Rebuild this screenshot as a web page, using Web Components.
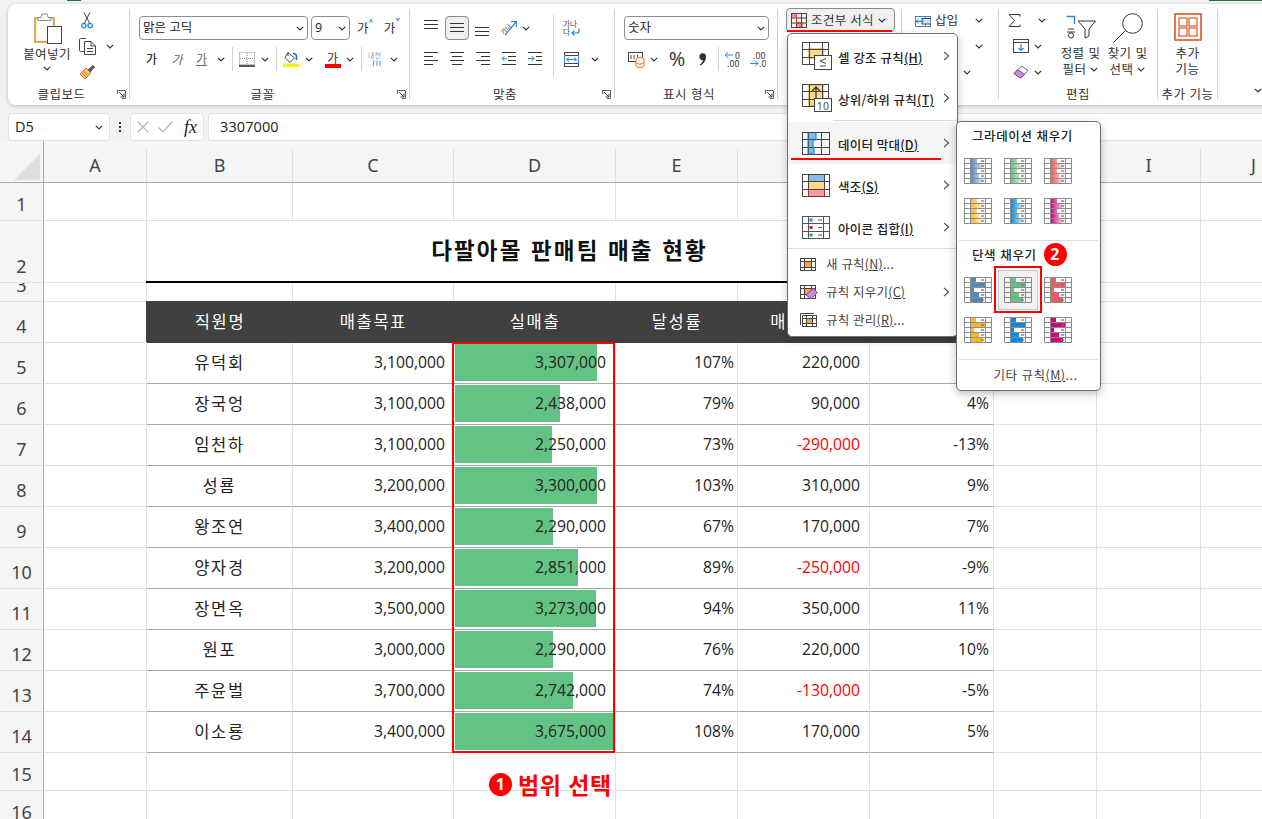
<!DOCTYPE html>
<html lang="ko">
<head>
<meta charset="utf-8">
<title>조건부 서식</title>
<style>
  html, body { margin: 0; height: 100%; overflow: hidden; background: #f3f3f3; }
  body { font-family: "Open Sans", "Noto Sans CJK KR", sans-serif; color: #222; position: relative; }
</style>
</head>
<body>
<xl-top-strip></xl-top-strip>
<xl-ribbon></xl-ribbon>
<xl-formula-bar name="D5" value="3307000"></xl-formula-bar>
<xl-sheet></xl-sheet>
<xl-cf-menu></xl-cf-menu>
<xl-bar-submenu></xl-bar-submenu>

<script>
const KR = `"Noto Sans CJK KR", sans-serif`;
const MIX = `"Open Sans", "Noto Sans CJK KR", sans-serif`;

// grid lines helper for the little table icons
const hLines = (ys, w, x = 0, stroke = "#333") => ys.map(y => `<path d="M${x} ${y}H${x + w}" stroke="${stroke}"/>`).join("");
const tableGrid = (w, h, xs, ys, stroke = "#444") =>
  `<rect x=".5" y=".5" width="${w - 1}" height="${h - 1}" fill="none" stroke="${stroke}"/>` +
  xs.map(x => `<path d="M${x} 0V${h}" stroke="${stroke}"/>`).join("") +
  ys.map(y => `<path d="M0 ${y}H${w}" stroke="${stroke}"/>`).join("");
const ktext = (x, y, s, size, fill = "#444", extra = "") =>
  `<text x="${x}" y="${y}" font-size="${size}" fill="${fill}" font-family='${KR}' ${extra}>${s}</text>`;
// two lines in one svg text element
const k2lines = (a, b, size, fill = "#444") =>
  `<text font-size="${size}" fill="${fill}" font-family='${KR}'><tspan x="${a[0]}" y="${a[1]}">${a[2]}</tspan><tspan x="${b[0]}" y="${b[1]}">${b[2]}</tspan></text>`;

const ICONS = {
  paste: [28, 31, `<rect x="1" y="5" width="19" height="24" fill="#fff3d6" stroke="#d79545" stroke-width="1.6"/>
    <rect x="3" y="7.5" width="15" height="19" fill="#fff"/>
    <path d="M4 7.5V4.5H7L8 1H13L14 4.5H17V7.5Z" fill="#fff" stroke="#8a8a8a"/>
    <rect x="13.5" y="13.5" width="14" height="17" fill="#fff" stroke="#444"/>`],
  cut: [12, 17, `<path d="M3 0.5L8.5 11M9 0.5L3.5 11" stroke="#444" fill="none"/>
    <circle cx="2.8" cy="13.6" r="2.2" fill="none" stroke="#2b88d8" stroke-width="1.3"/>
    <circle cx="9.2" cy="13.6" r="2.2" fill="none" stroke="#2b88d8" stroke-width="1.3"/>`],
  copy: [17, 17, `<path d="M5.5 13.5H1.5a1 1 0 0 1-1-1V1.5a1 1 0 0 1 1-1H7" fill="none" stroke="#444"/>
    <path d="M5.5 3.5H12L16.5 8V16.5H5.5Z" fill="#fff" stroke="#444"/>
    <path d="M12 3.5V8H16.5M8 10.5H14M8 13.5H14" fill="none" stroke="#444"/>`],
  painter: [17, 16, `<path d="M1 10L7 4L12 9L6 15Z" fill="#f6c27a" stroke="#d9771e"/>
    <path d="M3 9L7 13M5 7.5L9 11.5" stroke="#d9771e"/>
    <path d="M9 6L14 1.5L15.5 3L11 8" fill="#666" stroke="#444"/>`],
  launcher: [9, 9, `<path d="M.5 4V.5H8.5V8.5H5" fill="none" stroke="#666"/>
    <path d="M2 2L7 7M7 3.5V7H3.5" fill="none" stroke="#444"/>`],
  border: [16, 15, `<rect x=".5" y=".5" width="15" height="12" fill="none" stroke="#888" stroke-dasharray="1 1"/>
    <path d="M8 1V12M1 6.5H15" stroke="#888" stroke-dasharray="1 1"/>
    <path d="M0 14H16" stroke="#111" stroke-width="1.4"/>`],
  fill: [16, 16, `<path d="M5 1.5L11.5 7L7 11.5L2 6.5Z" fill="#fff" stroke="#444"/>
    <path d="M5 1.5V5" stroke="#444"/>
    <path d="M10 2.5a3 3 0 0 1 3.5 3V9" fill="none" stroke="#1f6fd0" stroke-width="1.6"/>
    <rect y="12.5" width="16" height="3.5" fill="#ffef00"/>`],
  fontcolor: [16, 17, `${ktext(2, 11.5, "가", 12, "#333")}<rect y="13" width="16" height="4" fill="#f00"/>`],
  ruby: [16, 16, `${ktext(0, 6.5, "내천", 7, "#999")}<path d="M6 9.5L5 15.5M9 9.5V15M12 9.5V15" stroke="#4a9be0" fill="none"/>`],
  "al-top": [14, 16, hLines([.5, 4.5, 8.5], 14)],
  "al-mid": [14, 16, hLines([3.5, 7.5, 11.5], 14)],
  "al-bot": [14, 16, hLines([7.5, 11.5, 15.5], 14)],
  orient: [16, 16, `${ktext(0, 13, "가나", 6.5, "#444", 'transform="rotate(-45 4 11)"')}
    <path d="M4 15L15 2M10 1.5H15.5V7" fill="none" stroke="#2b88d8" stroke-width="1.2"/>`],
  "ln-left": [14, 14, `<path d="M0 .5H14M0 4.5H9M0 8.5H14M0 12.5H9" stroke="#333"/>`],
  "ln-center": [14, 14, `<path d="M0 .5H14M2 4.5H12M0 8.5H14M2 12.5H12" stroke="#333"/>`],
  "ln-right": [14, 14, `<path d="M0 .5H14M5 4.5H14M0 8.5H14M5 12.5H14" stroke="#333"/>`],
  "ln-out": [14, 14, `<path d="M0 .5H14M6 4.5H14M6 8.5H14M0 12.5H14" stroke="#333"/><path d="M5 6.5H0M2.5 4L0 6.5L2.5 9" fill="none" stroke="#2b88d8"/>`],
  "ln-in": [14, 14, `<path d="M0 .5H14M8 4.5H14M8 8.5H14M0 12.5H14" stroke="#333"/><path d="M0 6.5H6M3.5 4L6 6.5L3.5 9" fill="none" stroke="#2b88d8"/>`],
  wrap: [17, 16, `${k2lines([0, 7, "가나"], [0, 15, "다"], 7.5)}
    <path d="M16 8.5V11a2 2 0 0 1-2 2H9M11.5 10.5L9 13L11.5 15.5" fill="none" stroke="#2b88d8" stroke-width="1.2"/>`],
  merge: [15, 15, `<rect x=".5" y=".5" width="14" height="14" fill="none" stroke="#444"/>
    <path d="M0 3.5H15M0 11.5H15" stroke="#444"/><rect x="1" y="4" width="13" height="7" fill="#fff"/>
    <path d="M.5 3V12M14.5 3V12" stroke="#2b88d8"/><path d="M2.5 7.5H12.5M5 5.5L2.5 7.5L5 9.5M10 5.5L12.5 7.5L10 9.5" fill="none" stroke="#2b88d8"/>`],
  account: [17, 17, `<rect x=".5" y="1.5" width="14" height="9" fill="#fff" stroke="#444"/>
    <path d="M3 4V8M6 4V8M9.500 4V8" stroke="#444"/>
    <ellipse cx="12" cy="8" rx="4" ry="1.600" fill="#fff" stroke="#d9771e"/>
    <path d="M8 8V15a4 1.600 0 0 0 8 0V8M8 11.500a4 1.600 0 0 0 8 0" fill="#fff" stroke="#d9771e"/>`],
  comma: [8, 13, `<path d="M3.800 .2a3.300 3.300 0 0 1 3.200 3.600c0 4-2.500 7.300-5.600 8.800l-.8-1c2-1.300 3.100-2.700 3.400-4.400a3.200 3.200 0 0 1-.2-7z" fill="#333"/>`],
  "dec-more": [17, 17, `<path d="M9 4H1M4 1L1 4L4 7" fill="none" stroke="#2b88d8"/>
    ${k2lines([11, 7.500, "0"], [3, 16, ".00"], 9)}`],
  "dec-less": [17, 17, `${k2lines([4, 7.500, ".00"], [10, 16, ".0"], 9)}
    <path d="M1 12.500H9M6 9.500L9 12.500L6 15.500" fill="none" stroke="#2b88d8"/>`],
  cf: [16, 15, `<rect x="1" y="0.500" width="5" height="4" fill="#f78a8a"/><rect x="5" y="9" width="7" height="5.500" fill="#f78a8a"/>
    ${tableGrid(16, 15, [5.5, 10.5], [5, 10])}
    <path d="M5.500 0V10H11" stroke="#e03a3a" fill="none"/>`],
  insert: [16, 13, `<rect x=".5" y="2.500" width="15" height="10" fill="#fff" stroke="#2b88d8"/>
    <path d="M0 7.500H16M10.500 2V13" stroke="#2b88d8"/><rect x="7" y="4.500" width="9" height="5.500" fill="#cfe4f7" stroke="#444"/>
    <path d="M9 7.200H1M3.500 5L1 7.200L3.500 9.500" fill="none" stroke="#2b88d8"/>`],
  sigma: [13, 13, `<path d="M12 2.500V.5H1L6.500 6.500L1 12.500H12V10.500" fill="none" stroke="#333" stroke-width="1"/>`],
  filldown: [16, 14, `<rect x=".5" y=".5" width="15" height="13" fill="#fff" stroke="#444"/><path d="M0 3.500H16" stroke="#444"/>
    <path d="M8 5V11.500M5.500 9L8 11.500L10.500 9" fill="none" stroke="#2b88d8" stroke-width="1.2"/>`],
  eraser: [16, 14, `<path d="M1 8.500L8.500 1L15 5.500L7.500 13Z" fill="#fff" stroke="#8a3fa0"/>
    <path d="M1 8.500L5 4.800L11.500 9.500L7.500 13Z" fill="#c88fd6" stroke="#8a3fa0"/>`],
  sort: [30, 24, `<path d="M.5 1.500H8.500V9" fill="none" stroke="#2b88d8" stroke-width="1.4"/>
    <path d="M2 14H8M1 17H9" stroke="#333"/><circle cx="5" cy="20.500" r="2.600" fill="none" stroke="#333"/>
    <path d="M12 6H29.500L23 14V21L19 23V14Z" fill="#fff" stroke="#333" stroke-linejoin="round"/>`],
  find: [30, 30, `<circle cx="19.500" cy="10.500" r="9.800" fill="#fff" stroke="#333"/>
    <path d="M12.500 17.500L.5 29.500" stroke="#333"/>`],
  addin: [28, 28, `<rect x="1" y="1" width="26" height="26" fill="#fff" stroke="#d83b01" stroke-width="1.4"/>
    <rect x="5" y="5" width="8" height="8" fill="none" stroke="#d83b01"/><rect x="15" y="5" width="8" height="8" fill="none" stroke="#d83b01"/>
    <rect x="5" y="15" width="8" height="8" fill="none" stroke="#d83b01"/><rect x="15" y="15" width="8" height="8" fill="none" stroke="#d83b01"/>`],
  cancel: [12, 12, `<path d="M.5 .5L11.500 11.500M11.500 .5L.5 11.500" stroke="#b8b8b8" stroke-width="1.200"/>`],
  check: [15, 12, `<path d="M.5 6.500L5 11L14.500 .5" fill="none" stroke="#b8b8b8" stroke-width="1.200"/>`],
  "cf-highlight": [30, 28, `<rect x="7" y="7" width="14" height="9" fill="#ffd98a" stroke="#e08a00"/>${tableGrid(27, 23, [7.500, 20.500], [7.500, 15.500])}
    <rect x="12.500" y="13.500" width="17" height="14" fill="#fff" stroke="#444"/><path d="M24 16.500L18 19L24 21.500M18 24H24" fill="none" stroke="#444"/>`],
  "cf-top": [30, 28, `<rect x="7" y="1" width="14" height="21" fill="#ffd98a" stroke="#e08a00"/>${tableGrid(27, 23, [7.500, 20.500], [7.500, 15.500])}
    <path d="M14 14V3M10 7L14 3L18 7" fill="none" stroke="#333" stroke-width="1.300"/>
    <rect x="12.500" y="14.500" width="17" height="13" fill="#fff" stroke="#444"/><text x="21" y="25.500" text-anchor="middle" font-size="10.500" fill="#444" font-family='"Open Sans"'>10</text>`],
  "cf-bars": [28, 23, `<rect x="6" y="1" width="8" height="7" fill="#7fb8ec"/><rect x="6" y="8" width="5" height="7" fill="#7fb8ec"/><rect x="6" y="15" width="6" height="7" fill="#7fb8ec"/>
    ${tableGrid(28, 23, [6.500, 19.500], [7.500, 15.500])}<path d="M6 1V22H12V15H11V8H14V1" fill="none" stroke="#1f74c4"/>`],
  "cf-scale": [28, 23, `<rect x="6" y="1" width="16" height="7" fill="#84bcf0"/><rect x="6" y="8" width="16" height="7" fill="#ffd98a"/><rect x="6" y="15" width="16" height="7" fill="#ff9aa0"/>
    ${tableGrid(28, 23, [6.500, 22.500], [7.500, 15.500])}<path d="M6.500 15V22M22.500 15V22" stroke="#c03030"/>`],
  "cf-iconset": [28, 23, `${tableGrid(28, 23, [6.500, 21.500], [7.500, 15.500], "#555")}
    <circle cx="9" cy="4" r="1.700" fill="#2b88d8"/><circle cx="9" cy="11.500" r="1.700" fill="#e81123"/><circle cx="9" cy="19" r="1.700" fill="#2b88d8"/>
    <path d="M16 4H20M16 11.500H20M16 19H20" stroke="#555"/>`],
  "cf-new": [16, 13, `<rect x="4" y="3" width="8" height="7" fill="#f7a93b"/>${tableGrid(16, 13, [4.500, 11.500], [3.500, 9.500])}`],
  "cf-clear": [18, 15, `<rect x="4" y="3" width="8" height="7" fill="#f7a93b"/>${tableGrid(16, 14, [4.500, 11.500], [3.500, 9.500])}
    <path d="M6 10L13 3.500L17.500 7.500L11 14Z" fill="#c88fd6" stroke="#8a3fa0"/>`],
  "cf-manage": [17, 14, `<path d="M.5 12V.5H14" fill="none" stroke="#444"/><g transform="translate(2 2)"><rect x="5" y="4" width="5" height="4" fill="#f7a93b"/>${tableGrid(15, 12, [4.500, 10.500], [3.500, 8.500])}</g>`],
};

// <xl-icon name="..."> : one inline svg from the ICONS map
class XlIcon extends HTMLElement {
  connectedCallback() {
    const [w, h, body] = ICONS[this.getAttribute("name")];
    this.attachShadow({ mode: "open" }).innerHTML = `
      <style>:host{display:inline-flex;flex:none;line-height:0}</style>
      <svg width="${w}" height="${h}" viewBox="0 0 ${w} ${h}" shape-rendering="geometricPrecision">${body}</svg>`;
  }
}
customElements.define("xl-icon", XlIcon);

class XlChevron extends HTMLElement {
  connectedCallback() {
    this.attachShadow({ mode: "open" }).innerHTML = `
      <style>:host{display:inline-flex;flex:none;line-height:0}</style>
      <svg width="8" height="5" viewBox="0 0 8 5"><path d="M.8 .8L4 4L7.200 .8" fill="none" stroke="#333" stroke-width="1.200"/></svg>`;
  }
}
customElements.define("xl-chevron", XlChevron);

// <xl-tool w="26"> : a fixed width cell in a ribbon row, centers whatever is slotted
class XlTool extends HTMLElement {
  connectedCallback() {
    const w = this.getAttribute("w");
    const ml = this.getAttribute("ml") || 0;
    this.attachShadow({ mode: "open" }).innerHTML = `
      <style>
        :host{display:flex;flex:none;align-items:center;justify-content:center;height:24px;box-sizing:border-box;
          width:${w}px;margin-left:${ml}px;font:12.500px/16px ${KR};color:#333}
        :host([active]){background:#f0f0f0;border:1px solid #8a8a8a;border-radius:4px}
      </style><slot></slot>`;
  }
}
customElements.define("xl-tool", XlTool);

class XlSelect extends HTMLElement {
  connectedCallback() {
    this.attachShadow({ mode: "open" }).innerHTML = `
      <style>
        :host{display:flex;flex:none;align-items:center;justify-content:space-between;box-sizing:border-box;height:24px;
          width:${this.getAttribute("w")}px;margin-left:${this.getAttribute("ml") || 0}px;padding:0 3px;background:#fff;
          border:1px solid #8d8d8d;border-radius:4px;font:12.500px/16px ${MIX};color:#222;white-space:nowrap}
      </style><slot></slot><xl-chevron></xl-chevron>`;
  }
}
customElements.define("xl-select", XlSelect);

// ribbon group: content on top, label and dialog launcher at the bottom, divider right
class XlGroup extends HTMLElement {
  connectedCallback() {
    const launcher = this.hasAttribute("launcher");
    this.attachShadow({ mode: "open" }).innerHTML = `
      <style>
        :host{display:flex;flex-direction:column;flex:none;box-sizing:border-box;height:90px;margin-top:5px;
          width:${this.getAttribute("w")}px;border-right:1px solid #d2d2d2}
        .body{flex:1;min-height:0}
        .foot{display:flex;align-items:center;height:16px;margin-bottom:-3px;padding-right:${launcher ? 3 : 0}px}
        .label{flex:1;text-align:center;font:12.500px/16px ${KR};color:#333;letter-spacing:.5px;white-space:nowrap}
        xl-icon{margin-left:2px}
      </style>
      <div class="body"><slot></slot></div>
      <div class="foot"><span class="label">${this.getAttribute("label") || ""}</span>
      ${launcher ? `<xl-icon name="launcher"></xl-icon>` : ""}</div>`;
  }
}
customElements.define("xl-group", XlGroup);

const tool = (w, inner, attrs = "") => `<xl-tool w="${w}" ${attrs}>${inner}</xl-tool>`;
const icon = n => `<xl-icon name="${n}"></xl-icon>`;
const chev = (w = 14, attrs = "") => tool(w, `<xl-chevron></xl-chevron>`, attrs);

class XlRibbon extends HTMLElement {
  connectedCallback() {
    const vsep = `<i class="sep"></i>`;
    this.attachShadow({ mode: "open" }).innerHTML = `
      <style>
        :host{display:flex;box-sizing:border-box;height:101px;margin:3px -12px 0 8px;background:#fff;border-radius:8px;
          box-shadow:0 1px 4px rgba(0,0,0,.22);font:12.500px/16px ${KR};color:#333}
        .row{display:flex;align-items:center;height:24px}
        .col{display:flex;flex-direction:column}
        .gap7{gap:7px}
        .split{display:flex}
        .sep{display:block;flex:none;width:1px;height:24px;background:#d2d2d2}
        .stack{text-align:center;white-space:nowrap;letter-spacing:.4px}
        .stack div{height:16px}
        .stack xl-chevron{vertical-align:2px;margin-left:4px}
        .paste{width:48px;margin-left:15px;padding-top:4px;align-items:center}
        .tail{flex:1;display:flex;align-items:flex-end;justify-content:flex-end;padding:0 12px 12px 0}
        .up{margin-top:-1px}
        .sup{font-size:8px;line-height:8px;color:#2b88d8;font-weight:700;align-self:flex-start;margin-top:2px}
      </style>

      <xl-group w="122" label="클립보드" launcher>
        <div class="split">
          <div class="col paste stack">
            <xl-icon name="paste" style="margin-left:2px"></xl-icon>
            <div style="margin-top:2px;line-height:16px">붙여넣기</div>
            <div style="height:16px;line-height:12px"><xl-chevron style="margin:0"></xl-chevron></div>
          </div>
          <div class="col up" style="gap:2px;margin-left:7px">
            <div class="row">${tool(18, icon("cut"))}</div>
            <div class="row">${tool(18, icon("copy"))}${chev(13, 'ml="7"')}</div>
            <div class="row">${tool(18, icon("painter"))}</div>
          </div>
        </div>
      </xl-group>

      <xl-group w="280" label="글꼴" launcher>
        <div class="col gap7" style="padding:7px 0 0 9px">
          <div class="row">
            <xl-select w="169">맑은 고딕</xl-select>
            <xl-select w="39" ml="3">9</xl-select>
            ${tool(14, `가<span class="sup">^</span>`, 'ml="8"')}
            ${tool(18, `가<span class="sup">ˇ</span>`, 'ml="11"')}
          </div>
          <div class="row">
            ${tool(25, `<span style="font-size:12px;font-weight:500">가</span>`)}
            ${tool(26, `<i style="color:#666;font-size:12px">가</i>`)}
            ${tool(23, `<u style="color:#666;font-size:12px">가</u>`)}
            ${chev(16)}
            ${tool(6, vsep)}
            ${tool(23, icon("border"))}${chev(14)}
            ${tool(9, vsep)}
            ${tool(20, icon("fill"))}${chev(16)}
            ${tool(20, icon("fontcolor"), 'ml="6"')}${chev(14)}
            ${tool(8, vsep)}
            ${tool(22, icon("ruby"))}${chev(14)}
          </div>
        </div>
      </xl-group>

      <xl-group w="205" label="맞춤" launcher>
        <div class="split" style="padding:7px 0 0 8px">
          <div class="col gap7" style="width:135px">
            <div class="row">
              ${tool(26, icon("al-top"))}${tool(24, icon("al-mid"), 'ml="1" active')}${tool(26, icon("al-bot"))}
              ${tool(24, icon("orient"), 'ml="2"')}${chev(10)}
            </div>
            <div class="row">
              ${tool(26, icon("ln-left"))}${tool(26, icon("ln-center"))}${tool(26, icon("ln-right"))}${tool(26, icon("ln-out"))}${tool(26, icon("ln-in"))}
            </div>
          </div>
          <i class="sep" style="height:62px;margin-top:-1px"></i>
          <div class="col gap7" style="margin-left:2px">
            <div class="row">${tool(31, icon("wrap"))}</div>
            <div class="row">${tool(31, icon("merge"))}${chev(12, 'ml="2"')}</div>
          </div>
        </div>
      </xl-group>

      <xl-group w="163" label="표시 형식" launcher>
        <div class="col gap7" style="padding:7px 0 0 9px">
          <div class="row"><xl-select w="145">숫자</xl-select></div>
          <div class="row">
            ${tool(24, icon("account"))}${chev(12)}
            ${tool(26, `<span style="font:20px/24px 'Open Sans'">%</span>`, 'ml="4"')}
            ${tool(26, icon("comma"))}
            ${tool(4, vsep)}
            ${tool(25, icon("dec-more"))}${tool(25, icon("dec-less"))}
          </div>
        </div>
      </xl-group>

      <xl-group w="124">
        <xl-tool w="109" ml="8" active style="margin-top:-1px;white-space:nowrap;letter-spacing:.3px;gap:4px;padding-right:4px">
          ${icon("cf")}<span>조건부 서식</span><xl-chevron></xl-chevron>
        </xl-tool>
      </xl-group>

      <xl-group w="97">
        <div class="col up" style="gap:2px;padding-left:13px">
          <div class="row">${icon("insert")}<span style="margin-left:4px;width:38px">삽입</span>${chev(12, 'ml="0"')}</div>
          <div class="row">${chev(12, 'ml="58"')}</div>
          <div class="row">${chev(12, 'ml="46"')}</div>
        </div>
      </xl-group>

      <xl-group w="159" label="편집">
        <div class="split">
          <div class="col up" style="gap:2px;width:50px;padding-left:8px">
            <div class="row">${tool(14, icon("sigma"))}${chev(12, 'ml="15"')}</div>
            <div class="row">${tool(22, icon("filldown"), 'ml="3"')}${chev(12, 'ml="0"')}</div>
            <div class="row">${tool(22, icon("eraser"), 'ml="3"')}${chev(12, 'ml="0"')}</div>
          </div>
          <div class="col stack" style="width:47px;align-items:center;padding-top:6px">
            ${icon("sort")}
            <div style="margin-top:6px">정렬 및</div>
            <div>필터<xl-chevron></xl-chevron></div>
          </div>
          <div class="col stack" style="width:47px;align-items:center;padding-top:4px">
            ${icon("find")}
            <div style="margin-top:2px">찾기 및</div>
            <div>선택<xl-chevron></xl-chevron></div>
          </div>
        </div>
      </xl-group>

      <xl-group w="60" label="추가 기능">
        <div class="col stack" style="align-items:center;padding-top:4px">
          ${icon("addin")}
          <div style="margin-top:4px">추가</div><div>기능</div>
        </div>
      </xl-group>

      <div class="tail"><xl-chevron></xl-chevron></div>`;
  }
}
customElements.define("xl-ribbon", XlRibbon);

class XlTopStrip extends HTMLElement {
  connectedCallback() {
    this.attachShadow({ mode: "open" }).innerHTML = `
      <style>
        :host{display:flex;height:1px}
        i{display:block;height:1px;background:#217346}
      </style>
      <i style="width:14px;margin-left:67px"></i><i style="width:53px;margin-left:auto"></i>`;
  }
}
customElements.define("xl-top-strip", XlTopStrip);

class XlFormulaBar extends HTMLElement {
  connectedCallback() {
    this.attachShadow({ mode: "open" }).innerHTML = `
      <style>
        :host{display:flex;box-sizing:border-box;height:28px;margin:8px 0 0 8px;font:14.500px/26px ${MIX};color:#222}
        .box{display:flex;align-items:center;box-sizing:border-box;height:28px;background:#fff;border:1px solid #e2e2e2;border-radius:4px}
        .name{width:102px;padding:0 6px;justify-content:space-between}
        .dots{width:20px;display:flex;flex-direction:column;align-items:center;justify-content:center;gap:2px}
        .dots b{width:2px;height:2px;background:#333;display:block}
        .fn{width:74px;padding-left:6px;gap:9px}
        .fx{font:italic 400 18px/20px "Liberation Serif",serif;color:#222;margin-left:2px}
        .val{flex:1;margin-left:4px;padding-left:11px;border-right:0;border-radius:4px 0 0 4px;letter-spacing:.1px}
      </style>
      <div class="box name"><span>${this.getAttribute("name")}</span><xl-chevron></xl-chevron></div>
      <div class="dots"><b></b><b></b><b></b></div>
      <div class="box fn">${icon("cancel")}${icon("check")}<span class="fx">fx</span></div>
      <div class="box val">${this.getAttribute("value")}</div>`;
  }
}
customElements.define("xl-formula-bar", XlFormulaBar);

const COLS = ["", "A", "B", "C", "D", "E", "F", "G", "H", "I", "J"];
const COL_W = [44, 103, 146, 161, 162, 122, 132, 124, 103, 104, 106];
const ROW_H = [38, 62, 19, 41, 41, 41, 41, 41, 41, 41, 41, 41, 41, 41, 38, 38];
const BAR_LEFT = 455;
const PEOPLE = [
  ["유덕회", "3,100,000", "3,307,000", "107%", "220,000", "", 597],
  ["장국엉", "3,100,000", "2,438,000", "79%", "90,000", "4%", 560],
  ["임천하", "3,100,000", "2,250,000", "73%", "-290,000", "-13%", 552],
  ["성룜", "3,200,000", "3,300,000", "103%", "310,000", "9%", 597],
  ["왕조연", "3,400,000", "2,290,000", "67%", "170,000", "7%", 553],
  ["양자경", "3,200,000", "2,851,000", "89%", "-250,000", "-9%", 578],
  ["장면옥", "3,500,000", "3,273,000", "94%", "350,000", "11%", 596],
  ["원포", "3,000,000", "2,290,000", "76%", "220,000", "10%", 553],
  ["주윤벌", "3,700,000", "2,742,000", "74%", "-130,000", "-5%", 573],
  ["이소룡", "3,400,000", "3,675,000", "108%", "170,000", "5%", 613],
];

class XlSheet extends HTMLElement {
  connectedCallback() {
    this.attachShadow({ mode: "open" }).innerHTML = `
      <style>
        :host{display:block;position:relative;height:678px;overflow:hidden;background:#fff;font:15.700px/20px ${MIX};color:#222}
        .grid{display:grid;width:${COL_W.reduce((a, b) => a + b)}px;grid-template-columns:${COL_W.map(w => w + "px").join(" ")};grid-template-rows:42px ${ROW_H.map(h => h + "px").join(" ")}}
        .c{box-sizing:border-box;border-right:1px solid #e1e1e1;border-bottom:1px solid #e1e1e1;display:flex;align-items:center;white-space:nowrap;min-width:0}
        .corner{background:#f5f5f5;border-bottom:1px solid #a9a9a9;border-right:1px solid #a9a9a9;display:flex;align-items:flex-end;justify-content:flex-end;padding:0 3px 2px 0}
        .ch{background:#f5f5f5;border-bottom:1px solid #a9a9a9;box-sizing:border-box;padding-top:8px;display:flex}
        .ch span{flex:1;border-right:1px solid #dfdfdf;text-align:center;font:18px/33px "Noto Sans",sans-serif;color:#444}
        .rh{box-sizing:border-box;background:#f5f5f5;border-right:1px solid #a9a9a9;border-bottom:1px solid #e1e1e1;display:flex;align-items:flex-end;justify-content:center;overflow:hidden;padding-bottom:4px;font:18px/24px "Noto Sans",sans-serif;color:#444}
        .title{grid-column:span 6;justify-content:center;margin-left:-1px;padding-bottom:5px;font:700 22.500px/30px ${KR};color:#111;letter-spacing:2.150px;border-right:1px solid #e1e1e1;border-bottom:1px solid #000;box-shadow:inset 0 -1px 0 #000;position:relative;z-index:1}
        .hd{background:#404040;border:0;color:#fff;justify-content:center;padding-bottom:4px;box-shadow:-1px -1px 0 #404040,0 -1px 0 #404040;font:16.500px/20px ${KR};letter-spacing:1.700px}
        .name{justify-content:center;padding-bottom:2px;font-family:${KR};font-size:16.500px;letter-spacing:1.700px}
        .num{justify-content:flex-end;padding-bottom:2px}
        .row-line{border-bottom-color:#a9a9a9}
        .lead{box-shadow:-1px 0 0 #a9a9a9}
        .neg{color:#f00}
        .range{position:absolute;left:452px;top:201px;width:163px;height:411px;box-sizing:border-box;border:2px solid #f00}
        .note{position:absolute;left:489px;top:630px;display:flex;align-items:center;gap:6px;color:#f00;font:700 23px/26px ${KR};letter-spacing:.5px}
      </style>
      <div class="grid">${this.cells()}</div>
      <div class="range"></div>
      <div class="note"><xl-badge>1</xl-badge><span>범위 선택</span></div>`;
  }

  cells() {
    const out = [];
    out.push(`<div class="corner"><svg width="26" height="26" viewBox="0 0 26 26"><path d="M26 0V26H0Z" fill="#dfdfdf"/></svg></div>`);
    COLS.slice(1).forEach(c => out.push(`<div class="ch"><span>${c}</span></div>`));
    const blank = (n, cls = "") => Array.from({ length: n }, () => `<div class="c ${cls}"></div>`).join("");
    ROW_H.forEach((_, i) => {
      const r = i + 1;
      out.push(`<div class="rh">${r}</div>`);
      if (r === 2) {
        out.push(blank(1), `<div class="c title">다팔아몰 판매팀 매출 현황</div>`, blank(3));
      } else if (r === 4) {
        out.push(blank(1));
        ["직원명", "매출목표", "실매출", "달성률", "매출차이", ""].forEach(t => out.push(`<div class="c hd">${t}</div>`));
        out.push(blank(3));
      } else if (r >= 5 && r <= 14) {
        const [name, goal, sales, rate, diff, pct, barEnd] = PEOPLE[r - 5];
        const neg = diff.startsWith("-") ? "neg" : "";
        const bar = `background:linear-gradient(#63c384,#63c384) no-repeat 1px 1px/${barEnd - BAR_LEFT}px 37px`;
        out.push(
          blank(1),
          `<div class="c name row-line">${name}</div>`,
          `<div class="c num row-line" style="padding-right:8px">${goal}</div>`,
          `<div class="c num row-line" style="padding-right:9px;${bar}">${sales}</div>`,
          `<div class="c num row-line" style="padding-right:3px">${rate}</div>`,
          `<div class="c num row-line ${neg}" style="padding-right:9px">${diff}</div>`,
          `<div class="c num row-line" style="padding-right:4px">${pct}</div>`,
          blank(3)
        );
      } else {
        out.push(blank(10));
      }
    });
    return out.join("");
  }
}
customElements.define("xl-sheet", XlSheet);

// red numbered marker used on the annotations
class XlBadge extends HTMLElement {
  connectedCallback() {
    this.attachShadow({ mode: "open" }).innerHTML = `
      <style>
        :host{display:inline-flex;flex:none;align-items:center;justify-content:center;width:23px;height:23px;border-radius:50%;
          background:#f00;color:#fff;font:700 16px/23px "Open Sans",sans-serif}
      </style><slot></slot>`;
  }
}
customElements.define("xl-badge", XlBadge);

class XlMenuItem extends HTMLElement {
  connectedCallback() {
    const small = this.hasAttribute("small");
    const arrow = this.hasAttribute("arrow");
    this.attachShadow({ mode: "open" }).innerHTML = `
      <style>
        :host{display:flex;align-items:center;box-sizing:border-box;height:${this.getAttribute("h") || 42}px;position:relative;
          font:12.500px/16px ${KR};color:${small ? "#444" : "#222"};letter-spacing:.2px;white-space:nowrap;
          font-weight:${small ? 400 : 500}}
        :host([hover]){background:#f5f5f5}
        .ic{flex:none;width:${small ? 38 : 50}px;padding-left:${small ? 12 : 14}px;box-sizing:border-box;display:flex}
        .txt{flex:1;padding-top:${small ? 0 : 4}px}
        svg{flex:none;margin-right:7px}
      </style>
      <div class="ic">${icon(this.getAttribute("icon"))}</div>
      <div class="txt"><slot></slot></div>
      ${arrow ? `<svg width="7" height="10" viewBox="0 0 7 10"><path d="M1 .8L5.500 5L1 9.200" fill="none" stroke="#444" stroke-width="1.100"/></svg>` : ""}`;
  }
}
customElements.define("xl-menu-item", XlMenuItem);

class XlCfMenu extends HTMLElement {
  connectedCallback() {
    this.attachShadow({ mode: "open" }).innerHTML = `
      <style>
        :host{position:absolute;left:787px;top:33px;width:171px;box-sizing:border-box;display:block;padding:1px 0 2px;background:#fff;
          border:1px solid #6e6e6e;border-radius:5px;box-shadow:0 3px 8px rgba(0,0,0,.22);z-index:5}
        .sep{height:1px;background:#dcdcdc;margin:1px 0}
        .red{position:absolute;left:3px;top:124px;width:150px;height:2px;background:#f00}
        .cfline{position:absolute;left:-1px;top:-4px;width:105px;height:2px;background:#f00}
      </style>
      <xl-menu-item icon="cf-highlight" arrow>셀 강조 규칙<u>(H)</u></xl-menu-item>
      <xl-menu-item icon="cf-top" arrow h="42">상위/하위 규칙<u>(T)</u></xl-menu-item>
      <div class="sep" style="margin-left:45px"></div>
      <xl-menu-item icon="cf-bars" arrow hover>데이터 막대<u>(D)</u></xl-menu-item>
      <xl-menu-item icon="cf-scale" arrow>색조<u>(S)</u></xl-menu-item>
      <xl-menu-item icon="cf-iconset" arrow>아이콘 집합<u>(I)</u></xl-menu-item>
      <div class="sep" style="margin-top:0"></div>
      <xl-menu-item small icon="cf-new" h="28">새 규칙<u>(N)</u>...</xl-menu-item>
      <xl-menu-item small icon="cf-clear" h="28" arrow>규칙 지우기<u>(C)</u></xl-menu-item>
      <xl-menu-item small icon="cf-manage" h="28">규칙 관리<u>(R)</u>...</xl-menu-item>
      <div class="red"></div>
      <div class="cfline"></div>`;
  }
}
customElements.define("xl-cf-menu", XlCfMenu);

// one data bar preview in the gallery: 5 row mini table with bars and dashes
class XlBarSwatch extends HTMLElement {
  connectedCallback() {
    const color = this.getAttribute("color");
    const grad = this.hasAttribute("gradient");
    const id = "g" + color.slice(1);
    const widths = [5, 14, 3, 8, 12];
    const rows = widths.map((w, i) =>
      `<rect x="7" y="${1 + i * 5}" width="${grad ? Math.max(w, 6) : w}" height="4" fill="${grad ? `url(#${id})` : color}"/>`).join("");
    const dashes = [0, 1, 2, 3, 4].map(i => `<path d="M17 ${3 + i * 5}H20" stroke="#777" stroke-width="1.300"/>`).join("");
    this.attachShadow({ mode: "open" }).innerHTML = `
      <style>
        :host{display:flex;flex:none;align-items:center;justify-content:center;box-sizing:border-box;width:40px;height:40px;line-height:0}
        :host([hover]){background:#f2f2f2;border:1px solid #c6c6c6}
      </style>
      <svg width="28" height="26" viewBox="0 0 28 26">
        <defs><linearGradient id="${id}" gradientUnits="userSpaceOnUse" x1="7" x2="21" y1="0" y2="0"><stop offset="0" stop-color="${color}"/><stop offset="1" stop-color="#fff"/></linearGradient></defs>
        ${rows}${dashes}
        <path d="M.5 .5H27.500V25.500H.5ZM6.500 0V26M21.500 0V26M0 5.500H28M0 10.500H28M0 15.500H28M0 20.500H28" fill="none" stroke="#8c8c8c"/>
      </svg>`;
  }
}
customElements.define("xl-bar-swatch", XlBarSwatch);

class XlBarSubmenu extends HTMLElement {
  connectedCallback() {
    const colors = ["#4f88c4", "#63c384", "#ff555a", "#ffb628", "#008aef", "#d6007b"];
    const swatches = (grad) => colors.map((c, i) =>
      `<xl-bar-swatch color="${c}" ${grad ? "gradient" : ""} ${!grad && i === 1 ? "hover" : ""}></xl-bar-swatch>`).join("");
    this.attachShadow({ mode: "open" }).innerHTML = `
      <style>
        :host{position:absolute;left:956px;top:121px;width:145px;height:270px;box-sizing:border-box;display:flex;flex-direction:column;background:#fff;
          border:1px solid #6e6e6e;border-radius:5px;box-shadow:0 3px 8px rgba(0,0,0,.25);z-index:6;
          font:12.500px/16px ${KR};color:#222;letter-spacing:.6px}
        .head{display:flex;flex:none;align-items:center;gap:8px;height:22px;padding-left:15px;font-weight:500;white-space:nowrap}
        .g{display:grid;flex:none;grid-template-columns:repeat(3,40px);grid-auto-rows:40px;margin-left:1px}
        .sep{flex:none;height:1px;background:#dcdcdc;margin:0 2px}
        .more{text-align:center;padding:7px 0 0 14px;color:#444;letter-spacing:.5px}
        .hl{position:absolute;left:37px;top:144px;width:48px;height:47px;box-sizing:border-box;border:2px solid #f00}
      </style>
      <div class="head" style="margin-top:3px">그라데이션 채우기</div>
      <div class="g" style="margin-top:4px">${swatches(true)}</div>
      <div class="sep" style="margin-top:9px"></div>
      <div class="head" style="margin-top:3px;margin-bottom:4px">단색 채우기<xl-badge style="margin-top:-1px;margin-left:-1px">2</xl-badge></div>
      <div class="g">${swatches(false)}</div>
      <div class="sep" style="margin-top:9px"></div>
      <div class="more">기타 규칙<u>(M)</u>...</div>
      <div class="hl"></div>`;
  }
}
customElements.define("xl-bar-submenu", XlBarSubmenu);
</script>
</body>
</html>
